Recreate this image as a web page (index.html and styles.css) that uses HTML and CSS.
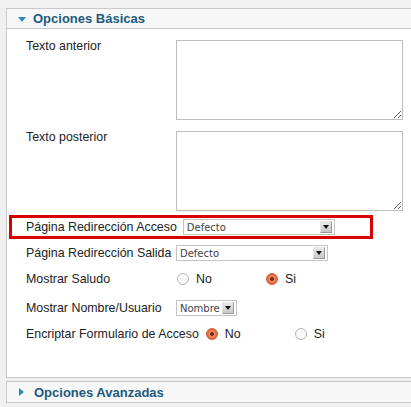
FILE: index.html
```html
<!DOCTYPE html>
<html lang="es">

<head>
  <meta charset="UTF-8">
  <title>Opciones del módulo</title>
  <link rel="stylesheet" href="styles.css">
</head>

<body>
  <div class="panel">
    <h3 class="panel-title"><span class="arrow-down"></span>Opciones Básicas</h3>
    <div class="panel-body">
      <div class="row row-area">
        <label class="label">Texto anterior</label>
        <textarea class="area"></textarea>
      </div>
      <div class="row row-area">
        <label class="label">Texto posterior</label>
        <textarea class="area"></textarea>
      </div>

      <!-- highlighted row -->
      <div class="row row-mark">
        <label class="label">Página Redirección Acceso</label>
        <div class="select select-wide"><span>Defecto</span><span class="select-btn"></span></div>
      </div>
      <div class="row row-salida">
        <label class="label">Página Redirección Salida</label>
        <div class="select select-wide"><span>Defecto</span><span class="select-btn"></span></div>
      </div>
      <div class="row row-saludo">
        <label class="label">Mostrar Saludo</label>
        <span class="option"><span class="radio"></span>No</span>
        <span class="option"><span class="radio checked"></span>Si</span>
      </div>
      <div class="row row-nombre">
        <label class="label">Mostrar Nombre/Usuario</label>
        <div class="select select-small"><span>Nombre</span><span class="select-btn"></span></div>
      </div>
      <div class="row row-cifrar">
        <label class="label">Encriptar Formulario de Acceso</label>
        <span class="option"><span class="radio checked"></span>No</span>
        <span class="option"><span class="radio"></span>Si</span>
      </div>
    </div>
  </div>

  <div class="panel panel-closed">
    <h3 class="panel-title"><span class="arrow-right"></span>Opciones Avanzadas</h3>
  </div>
</body>

</html>
```

FILE: styles.css
```css
/* Page */
body {
  margin: 0;
  padding-top: 8px;
  background: #f0f0f0;
  font-family: 'Liberation Sans', Arial, sans-serif;
  font-size: 12.4px;
  color: #222;
  overflow: hidden;
}

/* Panels */
.panel {
  margin: 0 -20px 0 6px;
  border: 1px solid #c9c9c9;
  background: #fff;
}

.panel-closed {
  margin-top: 3px;
}

.panel-title {
  margin: 0;
  height: 19px;
  line-height: 19px;
  padding-left: 10px;
  background: #f7f7f7;
  border-bottom: 1px solid #c9c9c9;
  color: #1d5a7e;
  font-size: 13px;
  font-weight: bold;
  display: flex;
  align-items: center;
}

.panel-closed .panel-title {
  border-bottom: none;
  height: 20px;
}

.arrow-down {
  width: 0;
  height: 0;
  border-left: 4px solid transparent;
  border-right: 4px solid transparent;
  border-top: 5px solid #2b8bb3;
  margin: 1px 7px 0 1px;
}

.arrow-right {
  width: 0;
  height: 0;
  border-top: 4px solid transparent;
  border-bottom: 4px solid transparent;
  border-left: 5px solid #2b8bb3;
  margin: 0 10px 0 2px;
}

.panel-body {
  padding: 11px 0 31px 2px;
}

/* Rows */
.row {
  display: flex;
  align-items: center;
  min-height: 24px;
  padding-left: 17px;
}

.label {
  min-width: 146px;
  margin-right: 4px;
  white-space: nowrap;
}

.row-area {
  align-items: flex-start;
  margin-bottom: 11px;
}

.row-area .label {
  line-height: 13px;
}

.area {
  width: 227px;
  height: 80px;
  box-sizing: border-box;
  margin: 0;
  border: 1px solid #bdbdbd;
  resize: both;
}

.row-mark {
  margin-top: -7px;
  width: 364px;
  box-sizing: border-box;
  border: 3px solid #d90000;
  padding-left: 14px;
  min-height: 24px;
}

.row-mark .select {
  margin-left: 2px;
}

.row-salida {
  margin-top: 2px;
}

.row-saludo {
  margin-top: 2px;
}

.row-nombre {
  margin-top: 5px;
}

.row-cifrar {
  margin-top: 2px;
}

/* Select boxes */
.select {
  display: flex;
  align-items: center;
  justify-content: space-between;
  height: 16px;
  box-sizing: border-box;
  border: 1px solid #c4c4c4;
  background: #fff;
  padding: 0 2px 0 3px;
  font-family: 'DejaVu Sans', Verdana, sans-serif;
  font-size: 10px;
  color: #444;
}

.select-wide {
  width: 152px;
}

.select-small {
  width: 61px;
}

.select-btn {
  position: relative;
  width: 10px;
  height: 10px;
  border: 1px solid #9a9a9a;
  border-top-color: #e6e6e6;
  border-left-color: #e6e6e6;
  background: linear-gradient(#e8e8e8, #c8c8c8);
}

.select-btn::after {
  content: "";
  position: absolute;
  left: 2px;
  top: 3px;
  border-left: 3px solid transparent;
  border-right: 3px solid transparent;
  border-top: 4px solid #111;
}

/* Radio options */
.option {
  display: flex;
  align-items: center;
  width: 89px;
  margin-left: 1px;
  margin-right: -1px;
}

.row-cifrar .option {
  margin-left: 3px;
  margin-right: -3px;
}

.radio {
  width: 10px;
  height: 10px;
  border: 1px solid #b5b5b5;
  border-radius: 50%;
  background: #fafafa;
  margin-right: 7px;
  position: relative;
}

.radio.checked {
  border-color: #d65a34;
  background: radial-gradient(circle, #7a2e12 0 1.6px, #f08a64 2.2px, #e2643c 5px);
}
```
